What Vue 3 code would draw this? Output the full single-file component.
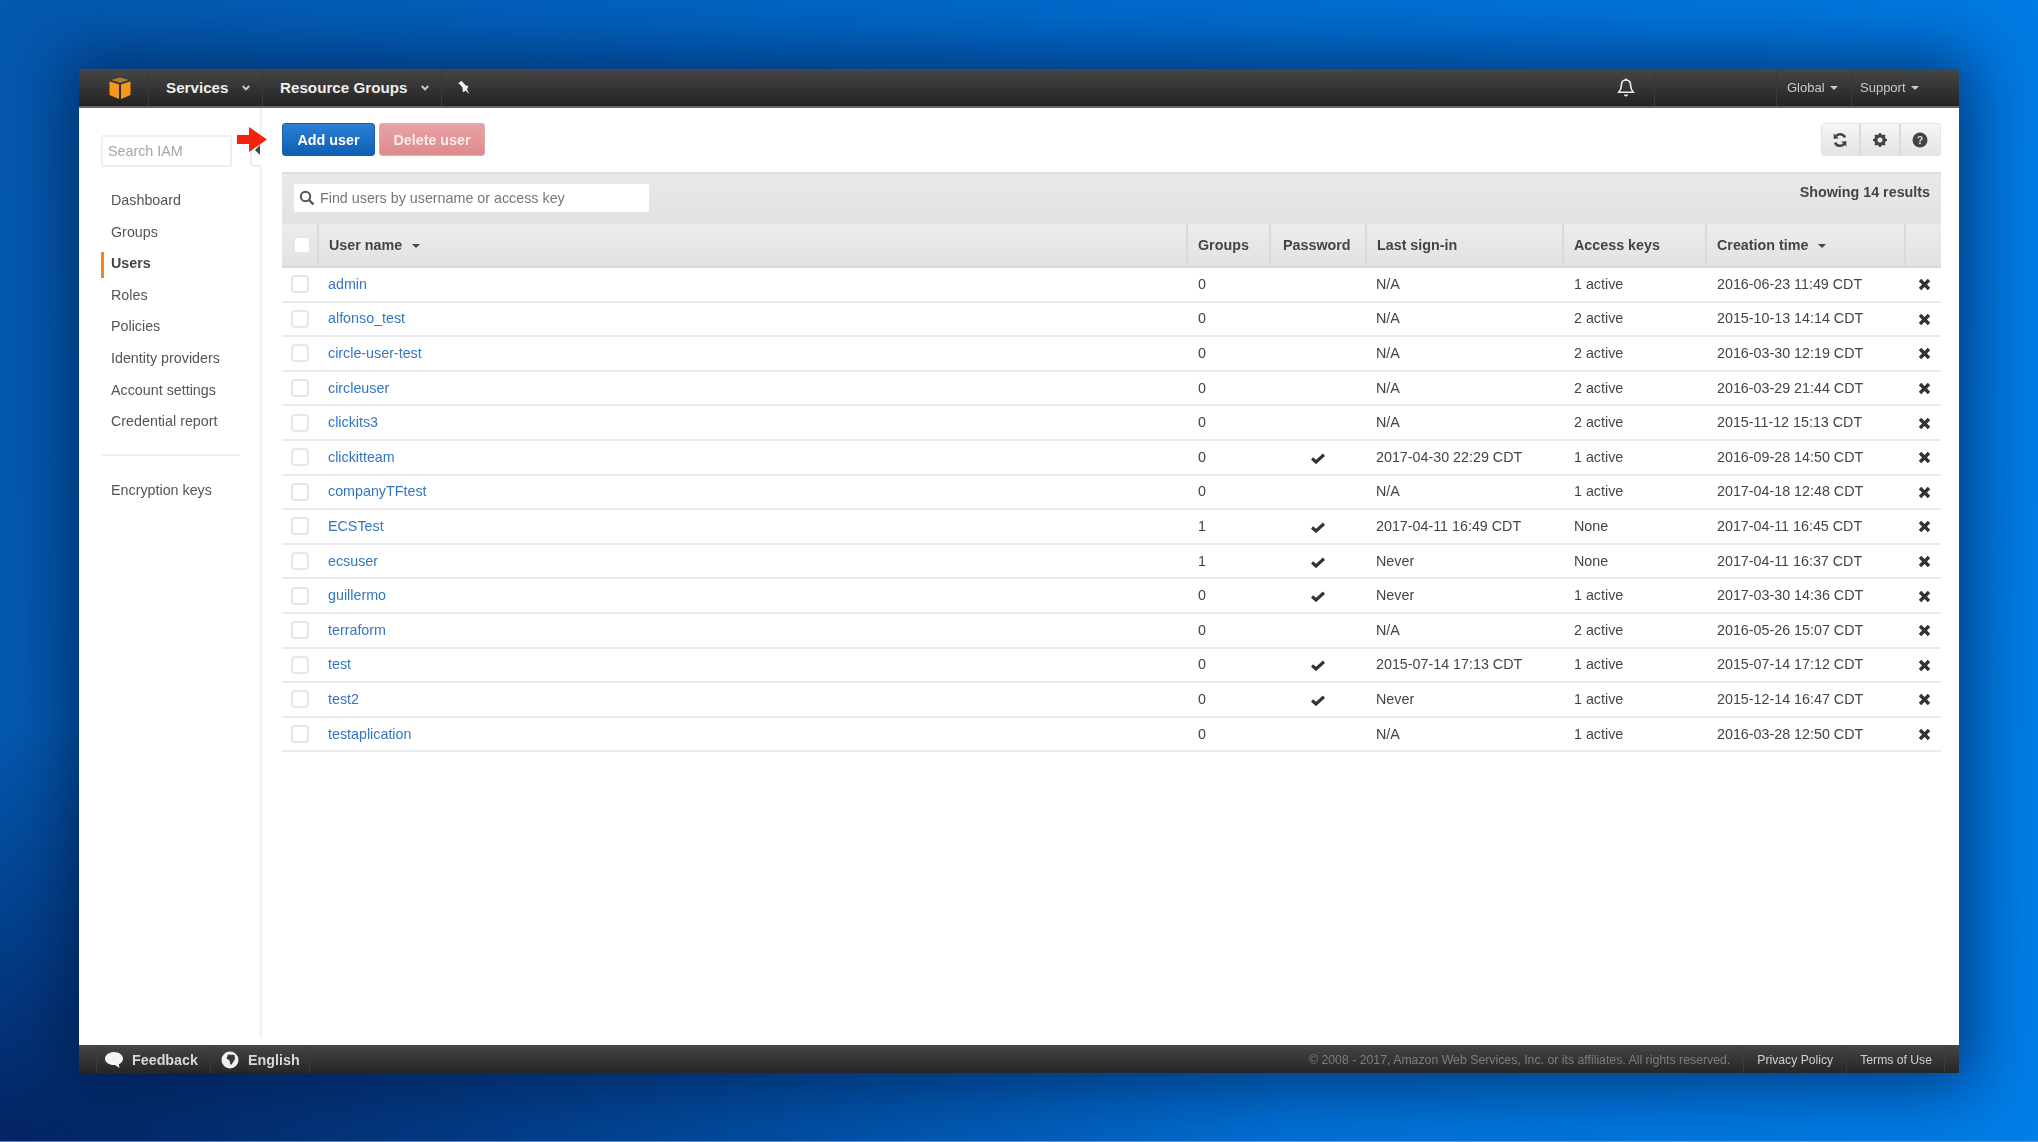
<script setup>
const navItems = [
  { label: 'Dashboard' },
  { label: 'Groups' },
  { label: 'Users', active: true },
  { label: 'Roles' },
  { label: 'Policies' },
  { label: 'Identity providers' },
  { label: 'Account settings' },
  { label: 'Credential report' },
]

const users = [
  { name: 'admin', groups: 0, password: false, signIn: 'N/A', keys: '1 active', created: '2016-06-23 11:49 CDT' },
  { name: 'alfonso_test', groups: 0, password: false, signIn: 'N/A', keys: '2 active', created: '2015-10-13 14:14 CDT' },
  { name: 'circle-user-test', groups: 0, password: false, signIn: 'N/A', keys: '2 active', created: '2016-03-30 12:19 CDT' },
  { name: 'circleuser', groups: 0, password: false, signIn: 'N/A', keys: '2 active', created: '2016-03-29 21:44 CDT' },
  { name: 'clickits3', groups: 0, password: false, signIn: 'N/A', keys: '2 active', created: '2015-11-12 15:13 CDT' },
  { name: 'clickitteam', groups: 0, password: true, signIn: '2017-04-30 22:29 CDT', keys: '1 active', created: '2016-09-28 14:50 CDT' },
  { name: 'companyTFtest', groups: 0, password: false, signIn: 'N/A', keys: '1 active', created: '2017-04-18 12:48 CDT' },
  { name: 'ECSTest', groups: 1, password: true, signIn: '2017-04-11 16:49 CDT', keys: 'None', created: '2017-04-11 16:45 CDT' },
  { name: 'ecsuser', groups: 1, password: true, signIn: 'Never', keys: 'None', created: '2017-04-11 16:37 CDT' },
  { name: 'guillermo', groups: 0, password: true, signIn: 'Never', keys: '1 active', created: '2017-03-30 14:36 CDT' },
  { name: 'terraform', groups: 0, password: false, signIn: 'N/A', keys: '2 active', created: '2016-05-26 15:07 CDT' },
  { name: 'test', groups: 0, password: true, signIn: '2015-07-14 17:13 CDT', keys: '1 active', created: '2015-07-14 17:12 CDT' },
  { name: 'test2', groups: 0, password: true, signIn: 'Never', keys: '1 active', created: '2015-12-14 16:47 CDT' },
  { name: 'testaplication', groups: 0, password: false, signIn: 'N/A', keys: '1 active', created: '2016-03-28 12:50 CDT' },
]
</script>

<template>
  <div class="page">
    <div class="window">
      <header class="topbar">
        <div class="top-cell logo-cell">
          <svg width="24" height="24" viewBox="0 0 24 24">
            <path d="M12 1.500 21 4 12 6.800 3 4z" fill="#b87a1e" />
            <path d="M1.500 5.500 11 8.600V23L1.500 19z" fill="#f7981d" />
            <path d="M22.500 5.500 13 8.600V23l9.500-4z" fill="#f7981d" />
          </svg>
        </div>
        <div class="top-cell menu-cell services">
          <span>Services</span>
          <svg class="chev" width="8" height="6" viewBox="0 0 8 6"><path d="M.8 1 4 4.400 7.200 1" fill="none" stroke="#ccc" stroke-width="2" /></svg>
        </div>
        <div class="top-cell menu-cell groups">
          <span>Resource Groups</span>
          <svg class="chev" width="8" height="6" viewBox="0 0 8 6"><path d="M.8 1 4 4.400 7.200 1" fill="none" stroke="#ccc" stroke-width="2" /></svg>
        </div>
        <div class="pin-cell">
          <svg width="14" height="16" viewBox="0 0 14 16">
            <path d="M1 3.500 4.500.8l1.300 1.400 3 3.200 2.700.7-1.500 3.400 2.500 4.500-3.800-3.200-2.800 1.500-.4-4.800L2.500 4z" fill="#f2f2f2" />
          </svg>
        </div>
        <div class="top-spacer"></div>
        <div class="bell-cell">
          <svg width="18" height="20" viewBox="0 0 18 20">
            <path d="M9 2c-3.200 0-4.600 2.400-4.600 5.200 0 3.600-1 5.200-2.600 7h14.400c-1.600-1.800-2.600-3.400-2.600-7C13.600 4.400 12.200 2 9 2z" fill="none" stroke="#eee" stroke-width="1.600" />
            <path d="M7 16.500h4a2 2 0 0 1-4 0z" fill="#eee" />
            <circle cx="9" cy="1.600" r="1.200" fill="#eee" />
          </svg>
        </div>
        <div class="small-menu global">Global <i class="caret light"></i></div>
        <div class="small-menu support">Support <i class="caret light"></i></div>
      </header>

      <div class="body">
        <aside class="sidebar">
          <input class="side-search" placeholder="Search IAM" />
          <span class="collapse"><i></i></span>
          <nav class="nav">
            <a v-for="item in navItems" :key="item.label" :class="['nav-item', { active: item.active }]">{{ item.label }}</a>
          </nav>
          <div class="nav-divider"></div>
          <a class="nav-item">Encryption keys</a>
        </aside>

        <main class="main">
          <svg class="arrow" width="30" height="25" viewBox="0 0 30 25"><path d="M0 8h12V0l18 12.500L12 25v-8H0z" fill="#f5230c" /></svg>
          <div class="toolbar">
            <button class="btn btn-add">Add user</button>
            <button class="btn btn-delete">Delete user</button>
            <div class="icon-group">
              <button class="icon-btn">
                <svg width="16" height="16" viewBox="0 0 16 16">
                  <path d="M13 5.400A5.600 5.600 0 0 0 3.600 4.300M3 10.600a5.600 5.600 0 0 0 9.400 1.100" fill="none" stroke="#444" stroke-width="2.600" />
                  <path d="M1.500 1.500 1.800 7l5-.8zM14.500 14.500 14.200 9l-5 .8z" fill="#444" />
                </svg>
              </button>
              <button class="icon-btn">
                <svg width="16" height="16" viewBox="0 0 16 16">
                  <circle cx="8" cy="8" r="4.200" fill="none" stroke="#444" stroke-width="3.400" />
                  <path d="M8 1v2M8 13v2M1 8h2M13 8h2M3 3l1.400 1.400M13 3l-1.400 1.400M3 13l1.400-1.400M13 13l-1.400-1.400" stroke="#444" stroke-width="2" />
                </svg>
              </button>
              <button class="icon-btn">
                <svg width="16" height="16" viewBox="0 0 16 16">
                  <circle cx="8" cy="8" r="7.500" fill="#444" />
                  <path d="M5.400 6.200C5.500 4.700 6.600 4 8 4c1.600 0 2.700.9 2.700 2.200 0 1.800-2 1.800-2 3.300H7.200c0-2.200 1.900-2.300 1.900-3.300 0-.5-.4-.9-1.100-.9-.7 0-1.100.4-1.200.9z" fill="#ddd" />
                  <rect x="7.100" y="10.400" width="1.700" height="1.700" fill="#ddd" />
                </svg>
              </button>
            </div>
          </div>

          <section class="grid">
            <div class="filter-bar">
              <label class="find">
                <svg width="16" height="16" viewBox="0 0 16 16">
                  <circle cx="6.500" cy="6.500" r="4.700" fill="none" stroke="#555" stroke-width="2" />
                  <path d="M10 10l4.500 4.500" stroke="#555" stroke-width="2.400" />
                </svg>
                <input placeholder="Find users by username or access key" />
              </label>
              <strong class="count">Showing 14 results</strong>
            </div>
            <table class="users">
              <thead>
                <tr>
                  <th class="c-check"><span class="check head"></span></th>
                  <th class="c-name">User name <i class="caret"></i></th>
                  <th class="c-groups">Groups</th>
                  <th class="c-pass">Password</th>
                  <th class="c-sign">Last sign-in</th>
                  <th class="c-keys">Access keys</th>
                  <th class="c-created">Creation time <i class="caret"></i></th>
                  <th class="c-x"></th>
                </tr>
              </thead>
              <tbody>
                <tr v-for="user in users" :key="user.name">
                  <td class="c-check"><span class="check"></span></td>
                  <td class="c-name"><a>{{ user.name }}</a></td>
                  <td class="nudge">{{ user.groups }}</td>
                  <td class="pass-cell">
                    <svg v-if="user.password" width="14" height="11" viewBox="0 0 14 11"><path d="M1 5.500 5 9 13 1.800" fill="none" stroke="#333" stroke-width="3.200" /></svg>
                  </td>
                  <td>{{ user.signIn }}</td>
                  <td class="nudge">{{ user.keys }}</td>
                  <td class="nudge">{{ user.created }}</td>
                  <td class="x-cell">
                    <svg width="13" height="13" viewBox="0 0 13 13"><path d="M2 2 11 11M11 2 2 11" fill="none" stroke="#333" stroke-width="3.400" /></svg>
                  </td>
                </tr>
              </tbody>
            </table>
          </section>
        </main>
      </div>

      <footer class="footbar">
        <div class="foot-cell feedback">
          <svg width="20" height="18" viewBox="0 0 20 18">
            <path d="M10 1c5 0 9 2.900 9 6.700 0 2.500-1.700 4.500-4.200 5.600l.7 3.700-4.400-3.100c-.4 0-.7.100-1.100.100-5 0-9-2.800-9-6.300S5 1 10 1z" fill="#f4f4f4" />
          </svg>
          <span>Feedback</span>
        </div>
        <div class="foot-cell lang">
          <svg width="18" height="18" viewBox="0 0 18 18">
            <circle cx="9" cy="9" r="8.500" fill="#f0f0f0" />
            <path d="M7 3.500 13.500 4l.5 4-3 5-1.500 1-1-4.500-3-2z" fill="#3a3a3a" />
          </svg>
          <span>English</span>
        </div>
        <div class="top-spacer"></div>
        <span class="copyright">© 2008 - 2017, Amazon Web Services, Inc. or its affiliates. All rights reserved.</span>
        <a class="foot-link">Privacy Policy</a>
        <a class="foot-link">Terms of Use</a>
      </footer>
    </div>
  </div>
</template>

<style>
html,
body {
  margin: 0;
}
</style>

<style scoped>
.page {
  box-sizing: border-box;
  width: 2038px;
  height: 1142px;
  padding: 69px 0 0 79px;
  overflow: hidden;
  font-family: "Liberation Sans", Arial, sans-serif;
  font-size: 14.3px;
  color: #444;
  background:
    radial-gradient(ellipse 1300px 420px at 0% 100%, rgba(4, 30, 90, 0.9), rgba(4, 30, 90, 0) 100%),
    linear-gradient(100deg, #0458ae 0%, #006ccf 50%, #007ee8 100%);
  box-shadow: inset 0 -1px 0 rgba(150, 185, 235, 0.6);
}

.window {
  display: flex;
  flex-direction: column;
  width: 1880px;
  height: 1004px;
  background: #fff;
  box-shadow: 0 0 60px 14px rgba(0, 20, 60, 0.6);
  filter: blur(0.7px);
}

.topbar {
  display: flex;
  align-items: stretch;
  flex: none;
  height: 37px;
  border-bottom: 2px solid #666;
  background: linear-gradient(#464646, #232323);
  color: #eee;
}

.top-cell {
  display: flex;
  align-items: center;
  border-right: 1px solid #3a3a3a;
}

.logo-cell {
  width: 70px;
  box-sizing: border-box;
  padding-left: 29px;
}

.menu-cell {
  box-sizing: border-box;
  font-size: 15.2px;
  font-weight: 700;
  padding-left: 17px;
}

.services {
  width: 114px;
}

.groups {
  width: 179px;
}

.chev {
  margin-left: auto;
  margin-right: 12px;
}

.pin-cell {
  display: flex;
  align-items: center;
  padding-left: 15px;
  width: 40px;
}

.top-spacer {
  flex: 1;
}

.bell-cell {
  display: flex;
  align-items: center;
  justify-content: center;
  width: 56px;
  margin-right: 121px;
  border-right: 1px solid #3a3a3a;
}

.small-menu {
  display: flex;
  align-items: center;
  gap: 5px;
  box-sizing: border-box;
  font-size: 13px;
  color: #c9c9c9;
  border-left: 1px solid #3a3a3a;
  padding-left: 10px;
}

.global {
  width: 75px;
}

.support {
  width: 108px;
  padding-left: 8px;
}

.caret {
  display: inline-block;
  width: 0;
  height: 0;
  margin-left: 6px;
  vertical-align: 2px;
  border: 4.5px solid transparent;
  border-top-color: #444;
  border-bottom: 0;
}

.caret.light {
  margin-left: 0;
  border-top-color: #ccc;
}

.body {
  display: flex;
  flex: 1;
  min-height: 0;
}

.sidebar {
  position: relative;
  box-sizing: border-box;
  flex: none;
  width: 183px;
  padding: 27px 0 0 22px;
  border-right: 2px solid #f0f0f0;
  margin-bottom: 7px;
}

.side-search {
  display: block;
  box-sizing: border-box;
  width: 131px;
  height: 32px;
  padding: 0 5px;
  border: 2px solid #eee;
  border-radius: 2px;
  font: inherit;
  outline: none;
}

.side-search::placeholder {
  color: #a5a5a5;
}

.collapse {
  position: absolute;
  top: 27px;
  right: -2px;
  display: flex;
  align-items: center;
  justify-content: center;
  width: 12px;
  height: 32px;
  background: #fff;
  border-left: 2px solid #eee;
  border-bottom: 2px solid #eee;
  border-radius: 0 0 0 4px;
  box-sizing: border-box;
}

.collapse i {
  width: 0;
  height: 0;
  border: 5px solid transparent;
  border-right-color: #444;
  border-left: 0;
}

.nav {
  display: flex;
  flex-direction: column;
  margin-top: 18px;
}

.nav-item {
  display: block;
  box-sizing: border-box;
  height: 31.6px;
  line-height: 31.6px;
  padding-left: 10px;
  color: #555;
  white-space: nowrap;
}

.nav-item.active {
  position: relative;
  font-weight: 700;
  color: #444;
}

.nav-item.active::before {
  content: "";
  position: absolute;
  left: 0;
  top: 4px;
  bottom: 2px;
  width: 3px;
  background: #ee8a1a;
}

.nav-divider {
  width: 139px;
  height: 2px;
  margin: 16px 0 19px;
  background: #eee;
}

.main {
  position: relative;
  flex: 1;
  min-width: 0;
  padding: 15px 18px 0 20px;
}

.arrow {
  position: absolute;
  left: -25px;
  top: 19px;
}

.toolbar {
  display: flex;
  align-items: center;
  gap: 4px;
  height: 33px;
}

.btn {
  height: 33px;
  padding: 0;
  border-radius: 3px;
  font: 700 14.3px "Liberation Sans", Arial, sans-serif;
  color: #fff;
}

.btn-add {
  width: 93px;
  border: 1px solid #1a5fa8;
  background: linear-gradient(#2a7fd6, #0f5fb3);
}

.btn-delete {
  width: 106px;
  border: 1px solid #e3a9ab;
  background: linear-gradient(#e8a3a5, #dd8a8c);
  color: #fbeaea;
}

.icon-group {
  display: flex;
  margin-left: auto;
  height: 33px;
  border: 1px solid #e2e2e2;
  border-radius: 3px;
  box-sizing: border-box;
}

.icon-btn {
  display: flex;
  align-items: center;
  justify-content: center;
  width: 39.5px;
  padding: 0;
  border: 0;
  border-right: 2px solid #dadada;
  background: linear-gradient(#f6f6f6, #e4e4e4);
}

.icon-btn:last-child {
  border-right: 0;
}

.grid {
  margin-top: 16px;
}

.filter-bar {
  display: flex;
  align-items: flex-start;
  justify-content: space-between;
  box-sizing: border-box;
  height: 52px;
  padding: 10px 11px 0 12px;
  background: linear-gradient(#e9e9e9, #e2e2e2);
  border-top: 2px solid #dcdcdc;
}

.find {
  display: flex;
  align-items: center;
  gap: 5px;
  box-sizing: border-box;
  width: 355px;
  height: 28px;
  padding-left: 5px;
  background: #fff;
  border-radius: 2px;
}

.find input {
  flex: 1;
  min-width: 0;
  border: 0;
  padding: 0;
  outline: none;
  font: inherit;
}

.find input::placeholder {
  color: #777;
}

.count {
  padding-top: 0;
  color: #444;
}

.users {
  width: 100%;
  table-layout: fixed;
  border-collapse: collapse;
}

.users th {
  box-sizing: border-box;
  height: 43px;
  padding: 0 0 0 10px;
  text-align: left;
  font-weight: 700;
  color: #444;
  background: linear-gradient(#ececec, #e2e2e2);
  border-right: 2px solid #dadada;
  border-bottom: 2px solid #d8d8d8;
  white-space: nowrap;
}

.users th:last-child {
  border-right: 0;
}

.users th.c-pass {
  padding-left: 12px;
}

.users td {
  box-sizing: border-box;
  height: 34.6px;
  padding: 0 0 1px 10px;
  border-bottom: 2px solid #ebebeb;
  white-space: nowrap;
}

.users td.nudge {
  padding-left: 11px;
}

.users a {
  color: #3376c4;
}

.users td.c-check,
.users th.c-check {
  padding: 0 0 0 9px;
}

.c-check {
  width: 36px;
}

.c-groups {
  width: 83px;
}

.c-pass {
  width: 96px;
}

.c-sign {
  width: 197px;
}

.c-keys {
  width: 143px;
}

.c-created {
  width: 199px;
}

.c-x {
  width: 36px;
}

.check {
  display: block;
  box-sizing: border-box;
  width: 18px;
  height: 18px;
  background: #fff;
  border: 2px solid #e6e6e6;
  border-radius: 4px;
}

.check.head {
  margin-left: 2px;
}

.pass-cell,
.x-cell {
  text-align: center;
}

.users td.pass-cell {
  padding: 3px 0 0;
}

.users td.x-cell {
  padding: 4px 0 0 2px;
}

.footbar {
  display: flex;
  align-items: stretch;
  flex: none;
  box-sizing: border-box;
  height: 28px;
  padding: 0 0 0 17px;
  background: linear-gradient(#454545, #262626);
  color: #d8d8d8;
}

.foot-cell {
  display: flex;
  align-items: center;
  gap: 8px;
  box-sizing: border-box;
  padding-top: 2px;
  font-weight: 700;
  border-left: 1px solid #3a3a3a;
}

.feedback {
  width: 114px;
  padding-left: 7px;
}

.lang {
  width: 100px;
  padding-left: 10px;
  gap: 9px;
  border-right: 1px solid #3a3a3a;
}

.copyright {
  align-self: center;
  padding-top: 1px;
  margin-right: 13px;
  font-size: 12.3px;
  color: #7d7d7d;
}

.foot-link {
  display: flex;
  align-items: center;
  padding: 1px 13px 0;
  font-size: 12.2px;
  color: #cfcfcf;
  border-left: 1px solid #3a3a3a;
}

.foot-link:last-child {
  margin-right: 14px;
  padding-right: 12px;
  border-right: 1px solid #3a3a3a;
}
</style>
